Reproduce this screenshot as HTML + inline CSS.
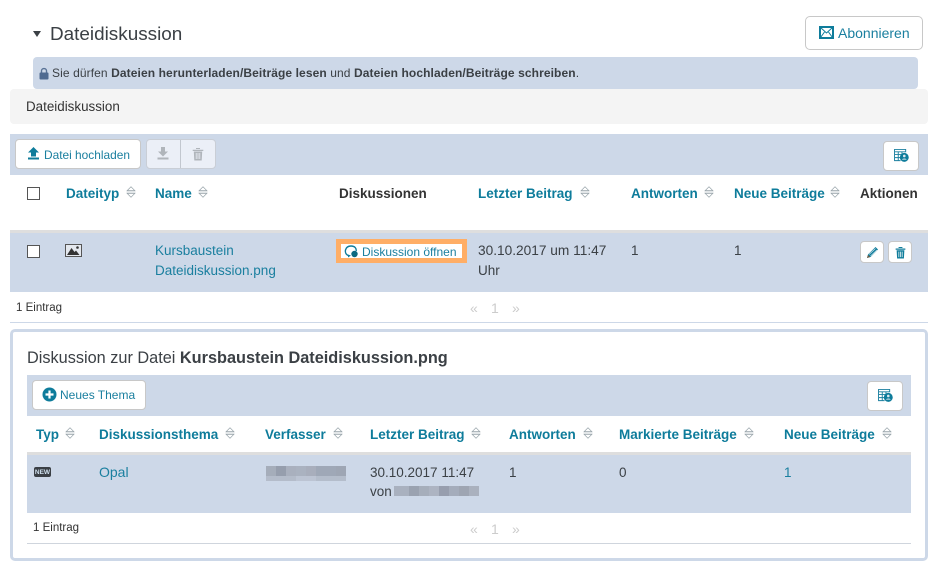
<!DOCTYPE html>
<html lang="de"><head><meta charset="utf-8"><title>Dateidiskussion</title>
<style>
html,body{margin:0;padding:0;background:#fff}
#p{position:relative;width:936px;height:563px;overflow:hidden;background:#fff;font-family:"Liberation Sans",sans-serif;font-size:13.5px;color:#3b4045}
#p *{box-sizing:border-box}
.a{position:absolute}
.t{position:absolute;white-space:nowrap;line-height:20px}
.h{font-weight:bold;font-size:13.5px;color:#0e7c9b}
.k{font-weight:bold;font-size:13.5px;color:#333}
.l{color:#1a7f9f}
.btn{position:absolute;background:#fff;border:1px solid #c8c8c8;border-radius:4px}
.blue{background:#cdd8e8}
.s{position:absolute;width:10px;height:12px}
.cb{position:absolute;width:13px;height:13px;border:1px solid #555;background:#fff}
.pg{color:#ccc;font-size:14px}
svg{display:block;position:absolute}
</style></head><body><div id="p">
<svg width="0" height="0"><defs>
<symbol id="so" viewBox="0 0 10 12"><path d="M1.2 4.6L5 .8L8.8 4.6Z" fill="none" stroke="#98a4aa" stroke-width=".7"/><path d="M.5 6H9.5" stroke="#aeb7bc" stroke-width=".7"/><path d="M1.2 7.4L5 11.2L8.8 7.4Z" fill="none" stroke="#98a4aa" stroke-width=".7"/></symbol>
<symbol id="tb" viewBox="0 0 16 14"><path d="M0.5 0.5H12.5V3H0.5ZM0.5 3V12.5H7M4.5 3V12.5M8.5 3V7M0.5 6H8M0.5 9.3H7" fill="none" stroke="#1a7f9f" stroke-width="1"/><circle cx="11" cy="9" r="4.8" fill="#0e7c9b"/><circle cx="11" cy="7.5" r="1.4" fill="#dfe8ee"/><path d="M8.5 11.5C9 9.8 13 9.8 13.5 11.5Z" fill="#dfe8ee"/></symbol>
</defs></svg>

<svg style="left:33px;top:31px" width="8" height="6"><path d="M0 0H8L4 6Z" fill="#3b4045"/></svg>
<div class="t" style="left:50px;top:25px;font-size:18.9px">Dateidiskussion</div>
<div class="btn" style="left:805px;top:16px;width:118px;height:34px;border-radius:5px"></div>
<svg style="left:819px;top:26px" width="15" height="13"><rect x="1" y="1" width="13" height="11" fill="#fff" stroke="#0e7c9b" stroke-width="2"/><path d="M1.5 1.5L7.5 7L13.5 1.5M1.5 11.5L5.5 6M13.5 11.5L9.5 6" fill="none" stroke="#0e7c9b"/></svg>
<div class="t l" style="left:838px;top:23px;font-size:14px">Abonnieren</div>

<div class="a blue" style="left:33px;top:57px;width:885px;height:32px;border-radius:4px"></div>
<svg style="left:39px;top:67px" width="10" height="13"><path d="M2.5 6V3.8C2.5 .8 7.5 .8 7.5 3.8V6" fill="none" stroke="#5a7396" stroke-width="1.4"/><rect x="0.5" y="5.5" width="9" height="7" rx="1" fill="#4f6a90"/></svg>
<div class="t" style="left:52px;top:63px;font-size:12px;letter-spacing:.1px">Sie dürfen <b>Dateien herunterladen/Beiträge lesen</b> und <b>Dateien hochladen/Beiträge schreiben</b>.</div>

<div class="a" style="left:10px;top:89px;width:918px;height:35px;background:#f4f4f4;border-radius:4px"></div>
<div class="t" style="left:26px;top:97px;font-size:13.4px;color:#333">Dateidiskussion</div>

<div class="a blue" style="left:10px;top:134px;width:918px;height:41px"></div>
<div class="btn" style="left:15px;top:139px;width:126px;height:30px"></div>
<svg style="left:27px;top:147px" width="13" height="13"><path d="M6.5 0L12 5.5H9V9.5H4V5.5H1Z" fill="#0e7c9b"/><rect x="1" y="10.5" width="11" height="2" fill="#0e7c9b"/></svg>
<div class="t l" style="left:44px;top:145px;font-size:11.9px">Datei hochladen</div>
<div class="a" style="left:146px;top:139px;width:70px;height:30px;background:#ebeff7;border:1px solid #c9ced6;border-radius:4px"></div>
<div class="a" style="left:180px;top:140px;width:1px;height:28px;background:#c2c7cf"></div>
<svg style="left:157px;top:147px" width="12" height="13"><path d="M4 0H8V4.5H11L6 9.5L1 4.5H4Z" fill="#b0b5bb"/><rect x="0.5" y="10.5" width="11" height="2" fill="#b0b5bb"/></svg>
<svg style="left:192px;top:147px" width="12" height="14"><path d="M4 2V1H8V2M0.7 2.7H11.3V4H0.7ZM1.8 4.5H10.2L9.7 13.5H2.3Z" fill="#b0b5bb" stroke="none"/><path d="M4 1.5H8" stroke="#b0b5bb"/><path d="M4.2 6V12M6 6V12M7.8 6V12" stroke="#ebeff7" stroke-width=".8"/></svg>
<div class="btn" style="left:883px;top:141px;width:36px;height:30px"></div>
<svg style="left:894px;top:149px" width="15" height="13"><use href="#tb"/></svg>

<div class="cb" style="left:27px;top:187px"></div>
<div class="t h" style="left:66px;top:184px">Dateityp</div><svg class="s" style="left:126px;top:186px"><use href="#so"/></svg>
<div class="t h" style="left:155px;top:184px">Name</div><svg class="s" style="left:198px;top:186px"><use href="#so"/></svg>
<div class="t k" style="left:339px;top:184px">Diskussionen</div>
<div class="t h" style="left:478px;top:184px">Letzter Beitrag</div><svg class="s" style="left:580px;top:186px"><use href="#so"/></svg>
<div class="t h" style="left:631px;top:184px">Antworten</div><svg class="s" style="left:704px;top:186px"><use href="#so"/></svg>
<div class="t h" style="left:734px;top:184px">Neue Beiträge</div><svg class="s" style="left:830px;top:186px"><use href="#so"/></svg>
<div class="t k" style="left:860px;top:184px">Aktionen</div>

<div class="a blue" style="left:10px;top:230px;width:918px;height:62px;border-top:3px solid #dedede"></div>
<div class="cb" style="left:27px;top:245px"></div>
<svg style="left:65px;top:244px" width="17" height="13"><rect x=".5" y=".5" width="16" height="12" fill="#e4e8ee" stroke="#555"/><path d="M2 11L6.5 4L9.5 8L11 6.5L14.5 11Z" fill="#333"/><circle cx="12.5" cy="3.5" r="1.3" fill="#333"/></svg>
<div class="t l" style="left:155px;top:241px">Kursbaustein</div>
<div class="t l" style="left:155px;top:261px">Dateidiskussion.png</div>
<div class="a" style="left:336px;top:239px;width:131px;height:24px;border:5px solid #ffae66;background:#fff"></div>
<svg style="left:344px;top:245px" width="15" height="13"><path d="M4 10.5C-.5 8 1 1 7 1C11 1 12.5 3.5 12.2 6" fill="none" stroke="#0e7c9b" stroke-width="1.4"/><path d="M4 9.5V12.5L7 10.5" fill="#0e7c9b"/><circle cx="10.5" cy="9" r="3.2" fill="#0c6980"/></svg>
<div class="t l" style="left:362px;top:242px;font-size:12px">Diskussion öffnen</div>
<div class="t" style="left:478px;top:241px;font-size:13.7px">30.10.2017 um 11:47</div>
<div class="t" style="left:478px;top:261px">Uhr</div>
<div class="t" style="left:631px;top:241px">1</div>
<div class="t" style="left:734px;top:241px">1</div>
<div class="btn" style="left:860px;top:241px;width:24px;height:22px"></div>
<svg style="left:866px;top:246px" width="13" height="13"><path d="M1 12L2 8.5L9.5 1L12 3.5L4.5 11Z" fill="#0e7c9b"/><path d="M3 8.5L9.5 2.5M4.5 10L11 4" stroke="#cfe3ea" stroke-width=".7"/><path d="M1 12L2 9L4 11Z" fill="#7a5a3a"/></svg>
<div class="btn" style="left:888px;top:241px;width:24px;height:22px"></div>
<svg style="left:895px;top:246px" width="11" height="13" viewBox="0 0 12 14"><path d="M4 2V1H8V2M0.7 2.7H11.3V4H0.7ZM1.8 4.5H10.2L9.7 13.5H2.3Z" fill="#0e7c9b"/><path d="M4 1.5H8" stroke="#0e7c9b"/><path d="M4.2 6V12M6 6V12M7.8 6V12" stroke="#fff" stroke-width=".8"/></svg>

<div class="t" style="left:16px;top:298px;font-size:11.5px;color:#333">1 Eintrag</div>
<div class="t pg" style="left:470px;top:298px">«</div><div class="t pg" style="left:491px;top:298px">1</div><div class="t pg" style="left:512px;top:298px">»</div>
<div class="a" style="left:10px;top:322px;width:918px;height:1px;background:#cdd8e8"></div>

<div class="a" style="left:10px;top:329px;width:918px;height:232px;border:3px solid #cdd8e8;border-radius:5px;background:#fff"></div>
<div class="t" style="left:27px;top:348px;font-size:16.3px">Diskussion zur Datei <b>Kursbaustein Dateidiskussion.png</b></div>
<div class="a blue" style="left:27px;top:375px;width:884px;height:41px"></div>
<div class="btn" style="left:32px;top:380px;width:114px;height:30px"></div>
<svg style="left:42px;top:387px" width="15" height="15"><circle cx="7.5" cy="7.5" r="7" fill="#0e7c9b"/><path d="M7.5 3.5V11.5M3.5 7.5H11.5" stroke="#fff" stroke-width="2.2"/></svg>
<div class="t l" style="left:60px;top:385px;font-size:12px">Neues Thema</div>
<div class="btn" style="left:867px;top:381px;width:36px;height:30px"></div>
<svg style="left:878px;top:389px" width="15" height="13"><use href="#tb"/></svg>

<div class="t h" style="left:36px;top:425px">Typ</div><svg class="s" style="left:65px;top:427px"><use href="#so"/></svg>
<div class="t h" style="left:99px;top:425px">Diskussionsthema</div><svg class="s" style="left:225px;top:427px"><use href="#so"/></svg>
<div class="t h" style="left:265px;top:425px">Verfasser</div><svg class="s" style="left:333px;top:427px"><use href="#so"/></svg>
<div class="t h" style="left:370px;top:425px">Letzter Beitrag</div><svg class="s" style="left:471px;top:427px"><use href="#so"/></svg>
<div class="t h" style="left:509px;top:425px">Antworten</div><svg class="s" style="left:583px;top:427px"><use href="#so"/></svg>
<div class="t h" style="left:619px;top:425px">Markierte Beiträge</div><svg class="s" style="left:744px;top:427px"><use href="#so"/></svg>
<div class="t h" style="left:784px;top:425px">Neue Beiträge</div><svg class="s" style="left:882px;top:427px"><use href="#so"/></svg>

<div class="a blue" style="left:27px;top:452px;width:884px;height:61px;border-top:3px solid #dedede"></div>
<div class="a" style="left:34px;top:467px;width:17px;height:10px;background:#3a3f45;border-radius:2px"></div>
<div class="t" style="left:34px;top:467.5px;width:17px;height:10px;line-height:10px;font-size:6.5px;font-weight:bold;color:#cfe0ee;text-align:center">NEW</div>
<div class="t l" style="left:99px;top:462px;font-size:14px">Opal</div>
<div class="a" style="left:266px;top:466px;width:80px;height:15px;background:linear-gradient(90deg,#a5adba 0 10px,#969ead 10px 20px,#a9b0be 20px 30px,#aab2c0 30px 40px,#a8aebc 40px 50px,#9fa8b7 50px 70px,#9ea6b4 70px 80px)"></div>
<div class="a" style="left:266px;top:476px;width:80px;height:5px;background:linear-gradient(90deg,#b4bcca 0 30px,#bcc4d3 30px 50px,#b4bdcb 50px 80px)"></div>
<div class="t" style="left:370px;top:463px">30.10.2017 11:47</div>
<div class="t" style="left:370px;top:482px">von</div>
<div class="a" style="left:394px;top:486px;width:85px;height:10px;background:linear-gradient(90deg,#a9b1bf 0 15px,#9aa2b0 15px 25px,#a6aebb 25px 35px,#adb4c2 35px 45px,#979eae 45px 55px,#a4acbb 55px 65px,#9ea5b2 65px 75px,#aab1be 75px 85px)"></div>
<div class="t" style="left:509px;top:463px">1</div>
<div class="t" style="left:619px;top:463px">0</div>
<div class="t l" style="left:784px;top:463px">1</div>

<div class="t" style="left:33px;top:518px;font-size:11.5px;color:#333">1 Eintrag</div>
<div class="t pg" style="left:470px;top:519px">«</div><div class="t pg" style="left:491px;top:519px">1</div><div class="t pg" style="left:512px;top:519px">»</div>
<div class="a" style="left:27px;top:543px;width:884px;height:1px;background:#cfd5dd"></div>
</div></body></html>
